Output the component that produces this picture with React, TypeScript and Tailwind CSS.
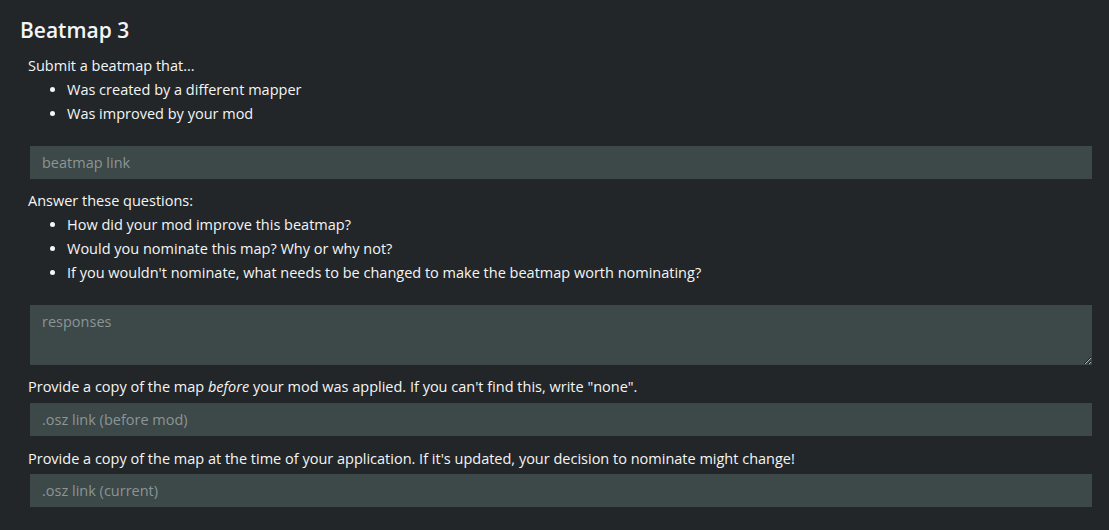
import React from "react";

const fieldClass =
  "block w-[1062px] h-[33px] ml-0.5 bg-[#3d4849] px-3 text-[14.5px] text-[#e4e6e6] placeholder:text-[#8b9595] outline-none";

function Bullets({ items }: { items: string[] }) {
  return (
    <ul className="list-disc pl-[39px]">
      {items.map((item) => (
        <li key={item} className="leading-6">
          {item}
        </li>
      ))}
    </ul>
  );
}

export default function App() {
  return (
    <div className="min-h-screen bg-[#222629] px-5 pt-[17px] text-[#f4f5f5] font-['Open_Sans','Noto_Sans',sans-serif]">
      <h2 className="text-[21px] font-semibold leading-[26px]">Beatmap 3</h2>
      <div className="mt-[11px] pl-2 text-[14.5px]">
        <p className="leading-6">Submit a beatmap that...</p>
        <Bullets
          items={["Was created by a different mapper", "Was improved by your mod"]}
        />
        <input className={`${fieldClass} mt-5`} placeholder="beatmap link" />
        <p className="mt-2.5 leading-6">Answer these questions:</p>
        <Bullets
          items={[
            "How did your mod improve this beatmap?",
            "Would you nominate this map? Why or why not?",
            "If you wouldn't nominate, what needs to be changed to make the beatmap worth nominating?",
          ]}
        />
        <textarea
          className="mt-5 ml-0.5 block h-[60px] w-[1062px] resize-y bg-[#3d4849] px-3 py-1.5 text-[14.5px] text-[#e4e6e6] placeholder:text-[#8b9595] outline-none"
          placeholder="responses"
        />
        <p className="mt-2.5 leading-6">
          Provide a copy of the map <i>before</i> your mod was applied. If you
          can't find this, write "none".
        </p>
        <input className={`${fieldClass} mt-1`} placeholder=".osz link (before mod)" />
        <p className="mt-[11px] leading-6">
          Provide a copy of the map at the time of your application. If it's
          updated, your decision to nominate might change!
        </p>
        <input className={`${fieldClass} mt-[3px]`} placeholder=".osz link (current)" />
      </div>
    </div>
  );
}
